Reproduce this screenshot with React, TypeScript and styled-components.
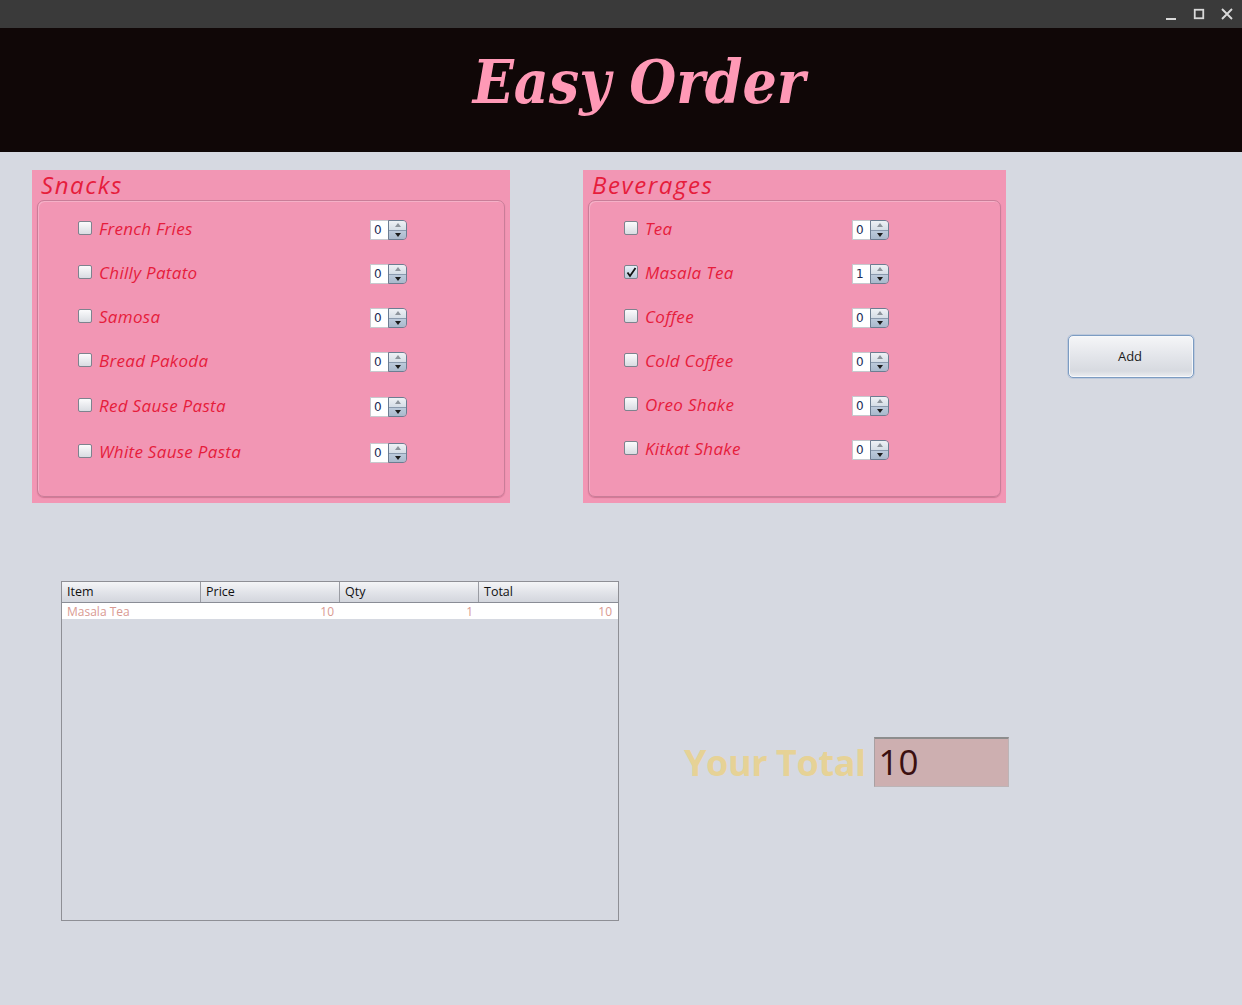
import React from "react";
import styled, { createGlobalStyle } from "styled-components";

const Global = createGlobalStyle`
  html, body { margin: 0; padding: 0; }
  body { background: #d6d9e1; width: 1242px; height: 1005px; overflow: hidden; font-family: "Open Sans", "DejaVu Sans", sans-serif; }
`;

const Window = styled.div`
  width: 1242px;
  height: 1005px;
  display: flex;
  flex-direction: column;
  background: #d6d9e1;
`;

const TitleBar = styled.div`
  height: 28px;
  background: #3a3a3a;
  display: flex;
  justify-content: flex-end;
  align-items: center;
  gap: 10px;
  padding-right: 6px;
`;

const WinBtn = styled.div`
  width: 18px;
  height: 18px;
  display: flex;
  align-items: center;
  justify-content: center;
`;

const Header = styled.header`
  height: 124px;
  background: #100707;
  display: flex;
  align-items: center;
  justify-content: center;
`;

const Title = styled.h1`
  margin: 0 0 16px 36px;
  font-family: "DejaVu Serif Condensed", "DejaVu Serif", serif;
  font-stretch: condensed;
  font-style: italic;
  font-weight: bold;
  font-size: 60px;
  line-height: 1;
  color: #ff99b6;
`;

const Main = styled.div`
  display: flex;
  flex-direction: column;
`;

const TopRow = styled.div`
  display: flex;
  align-items: flex-start;
  padding: 18px 0 0 32px;
`;

const Panel = styled.section<{ $w: number; $ml?: number }>`
  width: ${(p) => p.$w}px;
  height: 333px;
  margin-left: ${(p) => p.$ml ?? 0}px;
  background: #f296b4;
  box-sizing: border-box;
  padding: 0 5px 6px 5px;
  display: flex;
  flex-direction: column;
`;

const PanelTitle = styled.div`
  height: 30px;
  line-height: 29px;
  padding-left: 4px;
  font-family: "Open Sans", "DejaVu Sans", sans-serif;
  font-style: italic;
  font-size: 24px;
  letter-spacing: 1.6px;
  color: #e61d3c;
`;

const InnerBox = styled.div<{ $pl: number }>`
  flex: 1;
  border: 1px solid #c97d98;
  border-radius: 7px;
  box-shadow: inset 1px 1px 0 rgba(255,255,255,0.25), 0 1px 1px rgba(150,60,90,0.35);
  padding: 6px 0 0 ${(p) => p.$pl}px;
  display: flex;
  flex-direction: column;
`;

const ItemRow = styled.div<{ $h: number; $lw: number }>`
  height: ${(p) => p.$h}px;
  display: grid;
  grid-template-columns: ${(p) => p.$lw}px auto;
  align-items: center;
`;

const CheckLabel = styled.label`
  display: flex;
  align-items: center;
  gap: 7px;
`;

const Box = styled.span<{ $checked?: boolean }>`
  width: 12px;
  height: 12px;
  border: 1px solid #7d838e;
  border-radius: 2px;
  background: ${(p) =>
    p.$checked
      ? "linear-gradient(#e8f0f8, #b9c8d8)"
      : "linear-gradient(#fbfbfc, #d9dce2)"};
  display: flex;
  align-items: center;
  justify-content: center;
  margin-top: -2px;
  margin-left: -1px;
`;

const ItemText = styled.span`
  font-family: "Open Sans", "DejaVu Sans", sans-serif;
  font-style: italic;
  font-size: 17px;
  letter-spacing: 0.3px;
  color: #e61d3c;
  margin-top: -1px;
`;

const Spinner = styled.div`
  display: flex;
  height: 20px;
  margin-left: -1px;
  margin-top: 2px;
`;

const SpinField = styled.div`
  width: 18px;
  height: 20px;
  box-sizing: border-box;
  background: #fff;
  border: 1px solid #c7c9ce;
  border-right: none;
  font-family: "DejaVu Sans", sans-serif;
  font-size: 12px;
  color: #1a2a55;
  line-height: 19px;
  padding-left: 3px;
`;

const SpinButtons = styled.div`
  width: 19px;
  height: 20px;
  box-sizing: border-box;
  border: 1px solid #6c7d91;
  border-radius: 0 4px 4px 0;
  overflow: hidden;
  display: flex;
  flex-direction: column;
`;

const SpinHalf = styled.div<{ $down?: boolean }>`
  flex: 1;
  display: flex;
  align-items: center;
  justify-content: center;
  background: ${(p) => (p.$down ? "linear-gradient(#bccadb, #a9b9cc)" : "linear-gradient(#eef1f5, #d5dde6)")};
  border-top: ${(p) => (p.$down ? "1px solid #8a9aae" : "none")};
`;

const Arrow = styled.span<{ $down?: boolean }>`
  width: 0;
  height: 0;
  border-left: 3px solid transparent;
  border-right: 3px solid transparent;
  ${(p) => (p.$down ? "border-top: 4px solid #1c1c1c;" : "border-bottom: 4px solid #8d949c;")}
`;

const AddButton = styled.button`
  margin: 165px 0 0 62px;
  width: 126px;
  height: 43px;
  border: 1px solid #7c9cc2;
  border-radius: 5px;
  background: linear-gradient(#f5f6f8 0%, #e3e5ea 50%, #d7dae0 85%, #eceef1 100%);
  box-shadow: inset 0 0 0 1px #f7f8fa, 0 0 0 1px rgba(140,170,210,0.35);
  font-family: "Open Sans", "DejaVu Sans", sans-serif;
  font-size: 13px;
  color: #1a1a1a;
  padding: 0 2px 2px 0;
`;

const BottomRow = styled.div`
  display: flex;
  align-items: flex-start;
  padding: 78px 0 0 61px;
`;

const Table = styled.div`
  width: 558px;
  height: 340px;
  box-sizing: border-box;
  border: 1px solid #8e8f95;
  background: #d6d9e1;
  display: flex;
  flex-direction: column;
`;

const HeadRow = styled.div`
  display: grid;
  grid-template-columns: 139px 139px 139px 1fr;
  height: 21px;
  box-sizing: border-box;
  border-bottom: 1px solid #8a8d96;
  background: linear-gradient(#f4f5f7, #dfe1e7 60%, #d3d6dd);
`;

const HeadCell = styled.div<{ $last?: boolean }>`
  font-family: "Open Sans", "DejaVu Sans", sans-serif;
  font-size: 12.5px;
  color: #111;
  line-height: 20px;
  padding-left: 5px;
  border-right: ${(p) => (p.$last ? "none" : "1px solid #9a9ca3")};
`;

const DataRow = styled.div`
  display: grid;
  grid-template-columns: 139px 139px 139px 1fr;
  height: 16px;
  background: #fff;
`;

const DataCell = styled.div<{ $right?: boolean }>`
  font-family: "Open Sans", "DejaVu Sans", sans-serif;
  font-size: 12px;
  line-height: 17px;
  color: #d99a92;
  text-align: ${(p) => (p.$right ? "right" : "left")};
  padding: 0 6px 0 5px;
`;

const TotalArea = styled.div`
  margin: 155px 0 0 65px;
  display: flex;
  align-items: center;
  gap: 8px;
`;

const TotalLabel = styled.span`
  font-family: "Open Sans", "DejaVu Sans", sans-serif;
  font-weight: bold;
  font-size: 36px;
  color: #e6d296;
  letter-spacing: -0.4px;
  margin-top: 2px;
`;

const TotalField = styled.div`
  width: 135px;
  height: 50px;
  box-sizing: border-box;
  background: #cdafb0;
  border-top: 2px solid #8d8d8d;
  border-left: 1px solid #a9a0a2;
  border-right: 1px solid #bcb4b6;
  border-bottom: 1px solid #bcb4b6;
  font-family: "Open Sans", "DejaVu Sans", sans-serif;
  font-size: 35px;
  color: #3b1010;
  line-height: 46px;
  padding-left: 4px;
`;

type Item = { name: string; qty: number; checked?: boolean; h: number };

const snacks: Item[] = [
  { name: "French Fries", qty: 0, h: 44 },
  { name: "Chilly Patato", qty: 0, h: 44 },
  { name: "Samosa", qty: 0, h: 44 },
  { name: "Bread Pakoda", qty: 0, h: 44 },
  { name: "Red Sause Pasta", qty: 0, h: 46 },
  { name: "White Sause Pasta", qty: 0, h: 46 },
];

const beverages: Item[] = [
  { name: "Tea", qty: 0, h: 44 },
  { name: "Masala Tea", qty: 1, checked: true, h: 44 },
  { name: "Coffee", qty: 0, h: 44 },
  { name: "Cold Coffee", qty: 0, h: 44 },
  { name: "Oreo Shake", qty: 0, h: 44 },
  { name: "Kitkat Shake", qty: 0, h: 44 },
];

const Check = () => (
  <svg width="11" height="11" viewBox="0 0 11 11">
    <path d="M1.5 5.5 L4 9 L9.5 1" fill="none" stroke="#111" strokeWidth="1.8" />
  </svg>
);

const SpinnerCtl = ({ value }: { value: number }) => (
  <Spinner>
    <SpinField>{value}</SpinField>
    <SpinButtons>
      <SpinHalf>
        <Arrow />
      </SpinHalf>
      <SpinHalf $down>
        <Arrow $down />
      </SpinHalf>
    </SpinButtons>
  </Spinner>
);

const MenuPanel = ({
  title,
  items,
  w,
  ml,
  pl,
  lw,
}: {
  title: string;
  items: Item[];
  w: number;
  ml?: number;
  pl: number;
  lw: number;
}) => (
  <Panel $w={w} $ml={ml}>
    <PanelTitle>{title}</PanelTitle>
    <InnerBox $pl={pl}>
      {items.map((it) => (
        <ItemRow key={it.name} $h={it.h} $lw={lw}>
          <CheckLabel>
            <Box $checked={it.checked}>{it.checked && <Check />}</Box>
            <ItemText>{it.name}</ItemText>
          </CheckLabel>
          <SpinnerCtl value={it.qty} />
        </ItemRow>
      ))}
    </InnerBox>
  </Panel>
);

export default function App() {
  return (
    <Window>
      <Global />
      <TitleBar>
        <WinBtn>
          <svg width="12" height="12" viewBox="0 0 12 12">
            <rect x="1" y="10" width="10" height="2" fill="#d9d9d9" />
          </svg>
        </WinBtn>
        <WinBtn>
          <svg width="12" height="12" viewBox="0 0 12 12">
            <rect x="1.75" y="1.75" width="8.5" height="8.5" fill="none" stroke="#d9d9d9" strokeWidth="1.8" />
          </svg>
        </WinBtn>
        <WinBtn>
          <svg width="12" height="12" viewBox="0 0 12 12">
            <path d="M1 1 L11 11 M11 1 L1 11" stroke="#d9d9d9" strokeWidth="1.9" />
          </svg>
        </WinBtn>
      </TitleBar>
      <Header>
        <Title>Easy Order</Title>
      </Header>
      <Main>
        <TopRow>
          <MenuPanel title="Snacks" items={snacks} w={478} pl={41} lw={292} />
          <MenuPanel title="Beverages" items={beverages} w={423} ml={73} pl={36} lw={228} />
          <AddButton>Add</AddButton>
        </TopRow>
        <BottomRow>
          <Table>
            <HeadRow>
              <HeadCell>Item</HeadCell>
              <HeadCell>Price</HeadCell>
              <HeadCell>Qty</HeadCell>
              <HeadCell $last>Total</HeadCell>
            </HeadRow>
            <DataRow>
              <DataCell>Masala Tea</DataCell>
              <DataCell $right>10</DataCell>
              <DataCell $right>1</DataCell>
              <DataCell $right>10</DataCell>
            </DataRow>
          </Table>
          <TotalArea>
            <TotalLabel>Your Total</TotalLabel>
            <TotalField>10</TotalField>
          </TotalArea>
        </BottomRow>
      </Main>
    </Window>
  );
}
